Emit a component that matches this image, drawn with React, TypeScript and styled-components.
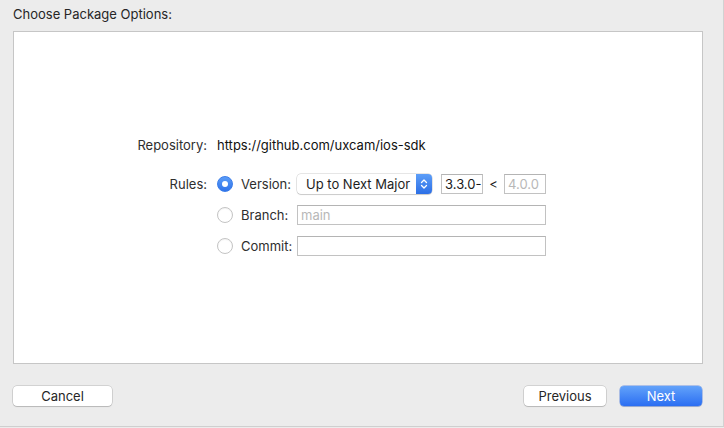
import React from "react";
import styled, { createGlobalStyle } from "styled-components";

const Global = createGlobalStyle`
  html, body { margin: 0; padding: 0; background: #ececec; }
  body { font-family: Inter, "Liberation Sans", Arial, sans-serif; font-size: 13px; color: #262626; }
  * { box-sizing: border-box; }
`;

const Window = styled.div`
  width: 724px;
  height: 427px;
  background: #ececec;
  border-right: 1px solid #d2d2d2;
  border-bottom: 1px solid #cfcfcf;
  display: flex;
  flex-direction: column;
  padding: 0 20px 0 13px;
`;

const Title = styled.div`
  height: 31px;
  padding-top: 6px;
  font-size: 13px;
  color: #262626;
`;

const Panel = styled.div`
  width: 690px;
  height: 333px;
  background: #fff;
  border: 1px solid #c6c6c6;
  padding-top: 103px;
`;

const Form = styled.div`
  display: grid;
  grid-template-columns: 193px 1fr;
  column-gap: 10px;
  row-gap: 19px;
  align-items: start;
`;

const Label = styled.div`
  text-align: right;
  height: 20px;
  line-height: 20px;
  color: #2e2e2e;
`;

const Value = styled.div`
  height: 20px;
  line-height: 20px;
  color: #111;
`;

const Rules = styled.div`
  display: grid;
  grid-template-columns: 16px 48px auto;
  column-gap: 8px;
  row-gap: 11px;
  align-items: center;
`;

const Radio = styled.span<{ $on?: boolean }>`
  width: 16px;
  height: 16px;
  border-radius: 50%;
  display: flex;
  align-items: center;
  justify-content: center;
  background: ${(p) => (p.$on ? "linear-gradient(#5a9cf8, #2f73ea)" : "#fff")};
  border: 1px solid ${(p) => (p.$on ? "#3a7de9" : "#c4c4c4")};
  box-shadow: ${(p) => (p.$on ? "none" : "inset 0 1px 1px rgba(0,0,0,0.05)")};
  &::after {
    content: "";
    display: ${(p) => (p.$on ? "block" : "none")};
    width: 6px;
    height: 6px;
    border-radius: 50%;
    background: #fff;
  }
`;

const RuleLabel = styled.span`
  color: #2e2e2e;
  height: 20px;
  line-height: 20px;
  white-space: nowrap;
`;

const Controls = styled.div`
  display: flex;
  align-items: center;
`;

const Popup = styled.div`
  width: 135px;
  height: 20px;
  display: flex;
  background: #fff;
  border-radius: 4px;
  box-shadow: 0 0 0 0.5px rgba(0,0,0,0.2), 0 1px 1px rgba(0,0,0,0.12);
  overflow: hidden;
  margin-right: 9px;
`;

const PopupText = styled.span`
  flex: 1;
  padding-left: 9px;
  line-height: 20px;
  color: #1e1e1e;
  white-space: nowrap;
`;

const PopupArrows = styled.span`
  width: 16px;
  background: linear-gradient(#5d9ef8, #2c6fe6);
  display: flex;
  align-items: center;
  justify-content: center;
`;

const Field = styled.div<{ $w: number; $muted?: boolean }>`
  width: ${(p) => p.$w}px;
  height: 20px;
  border: 1px solid #c2c2c2;
  border-top-color: #b4b4b4;
  background: #fff;
  padding-left: 3px;
  line-height: 18px;
  color: ${(p) => (p.$muted ? "#b8b8b8" : "#1a1a1a")};
  white-space: nowrap;
  overflow: hidden;
`;

const Less = styled.span`
  width: 21px;
  text-align: center;
  color: #222;
`;

const Footer = styled.div`
  display: flex;
  align-items: center;
  margin-top: 22px;
  padding-right: 1px;
`;

const Button = styled.button<{ $w: number; $primary?: boolean }>`
  width: ${(p) => p.$w}px;
  height: 20px;
  padding: 0;
  font: inherit;
  font-size: 13px;
  border-radius: 4px;
  border: none;
  color: ${(p) => (p.$primary ? "#fff" : "#262626")};
  background: ${(p) => (p.$primary ? "linear-gradient(#62a2fa, #2b6ef2)" : "#fff")};
  box-shadow: ${(p) =>
    p.$primary
      ? "0 0 0 0.5px rgba(30,90,220,0.6), 0 1px 1px rgba(0,0,0,0.15)"
      : "0 0 0 0.5px rgba(0,0,0,0.22), 0 1px 1px rgba(0,0,0,0.12)"};
  & + & { margin-left: 14px; }
`;

const Spacer = styled.div`
  flex: 1;
`;

const Arrows = () => (
  <svg width="8" height="12" viewBox="0 0 8 12" fill="none">
    <path d="M1.5 4.5 L4 2 L6.5 4.5" stroke="#fff" strokeWidth="1.3" strokeLinecap="round" strokeLinejoin="round" />
    <path d="M1.5 7.5 L4 10 L6.5 7.5" stroke="#fff" strokeWidth="1.3" strokeLinecap="round" strokeLinejoin="round" />
  </svg>
);

export default function App() {
  return (
    <>
      <Global />
      <Window>
        <Title>Choose Package Options:</Title>
        <Panel>
          <Form>
            <Label>Repository:</Label>
            <Value>https://github.com/uxcam/ios-sdk</Value>
            <Label>Rules:</Label>
            <Rules>
              <Radio $on />
              <RuleLabel>Version:</RuleLabel>
              <Controls>
                <Popup>
                  <PopupText>Up to Next Major</PopupText>
                  <PopupArrows>
                    <Arrows />
                  </PopupArrows>
                </Popup>
                <Field $w={42}>3.3.0-</Field>
                <Less>&lt;</Less>
                <Field $w={42} $muted>4.0.0</Field>
              </Controls>
              <Radio />
              <RuleLabel>Branch:</RuleLabel>
              <Controls>
                <Field $w={249} $muted>main</Field>
              </Controls>
              <Radio />
              <RuleLabel>Commit:</RuleLabel>
              <Controls>
                <Field $w={249} />
              </Controls>
            </Rules>
          </Form>
        </Panel>
        <Footer>
          <Button $w={99}>Cancel</Button>
          <Spacer />
          <Button $w={82}>Previous</Button>
          <Button $w={82} $primary>Next</Button>
        </Footer>
      </Window>
    </>
  );
}
